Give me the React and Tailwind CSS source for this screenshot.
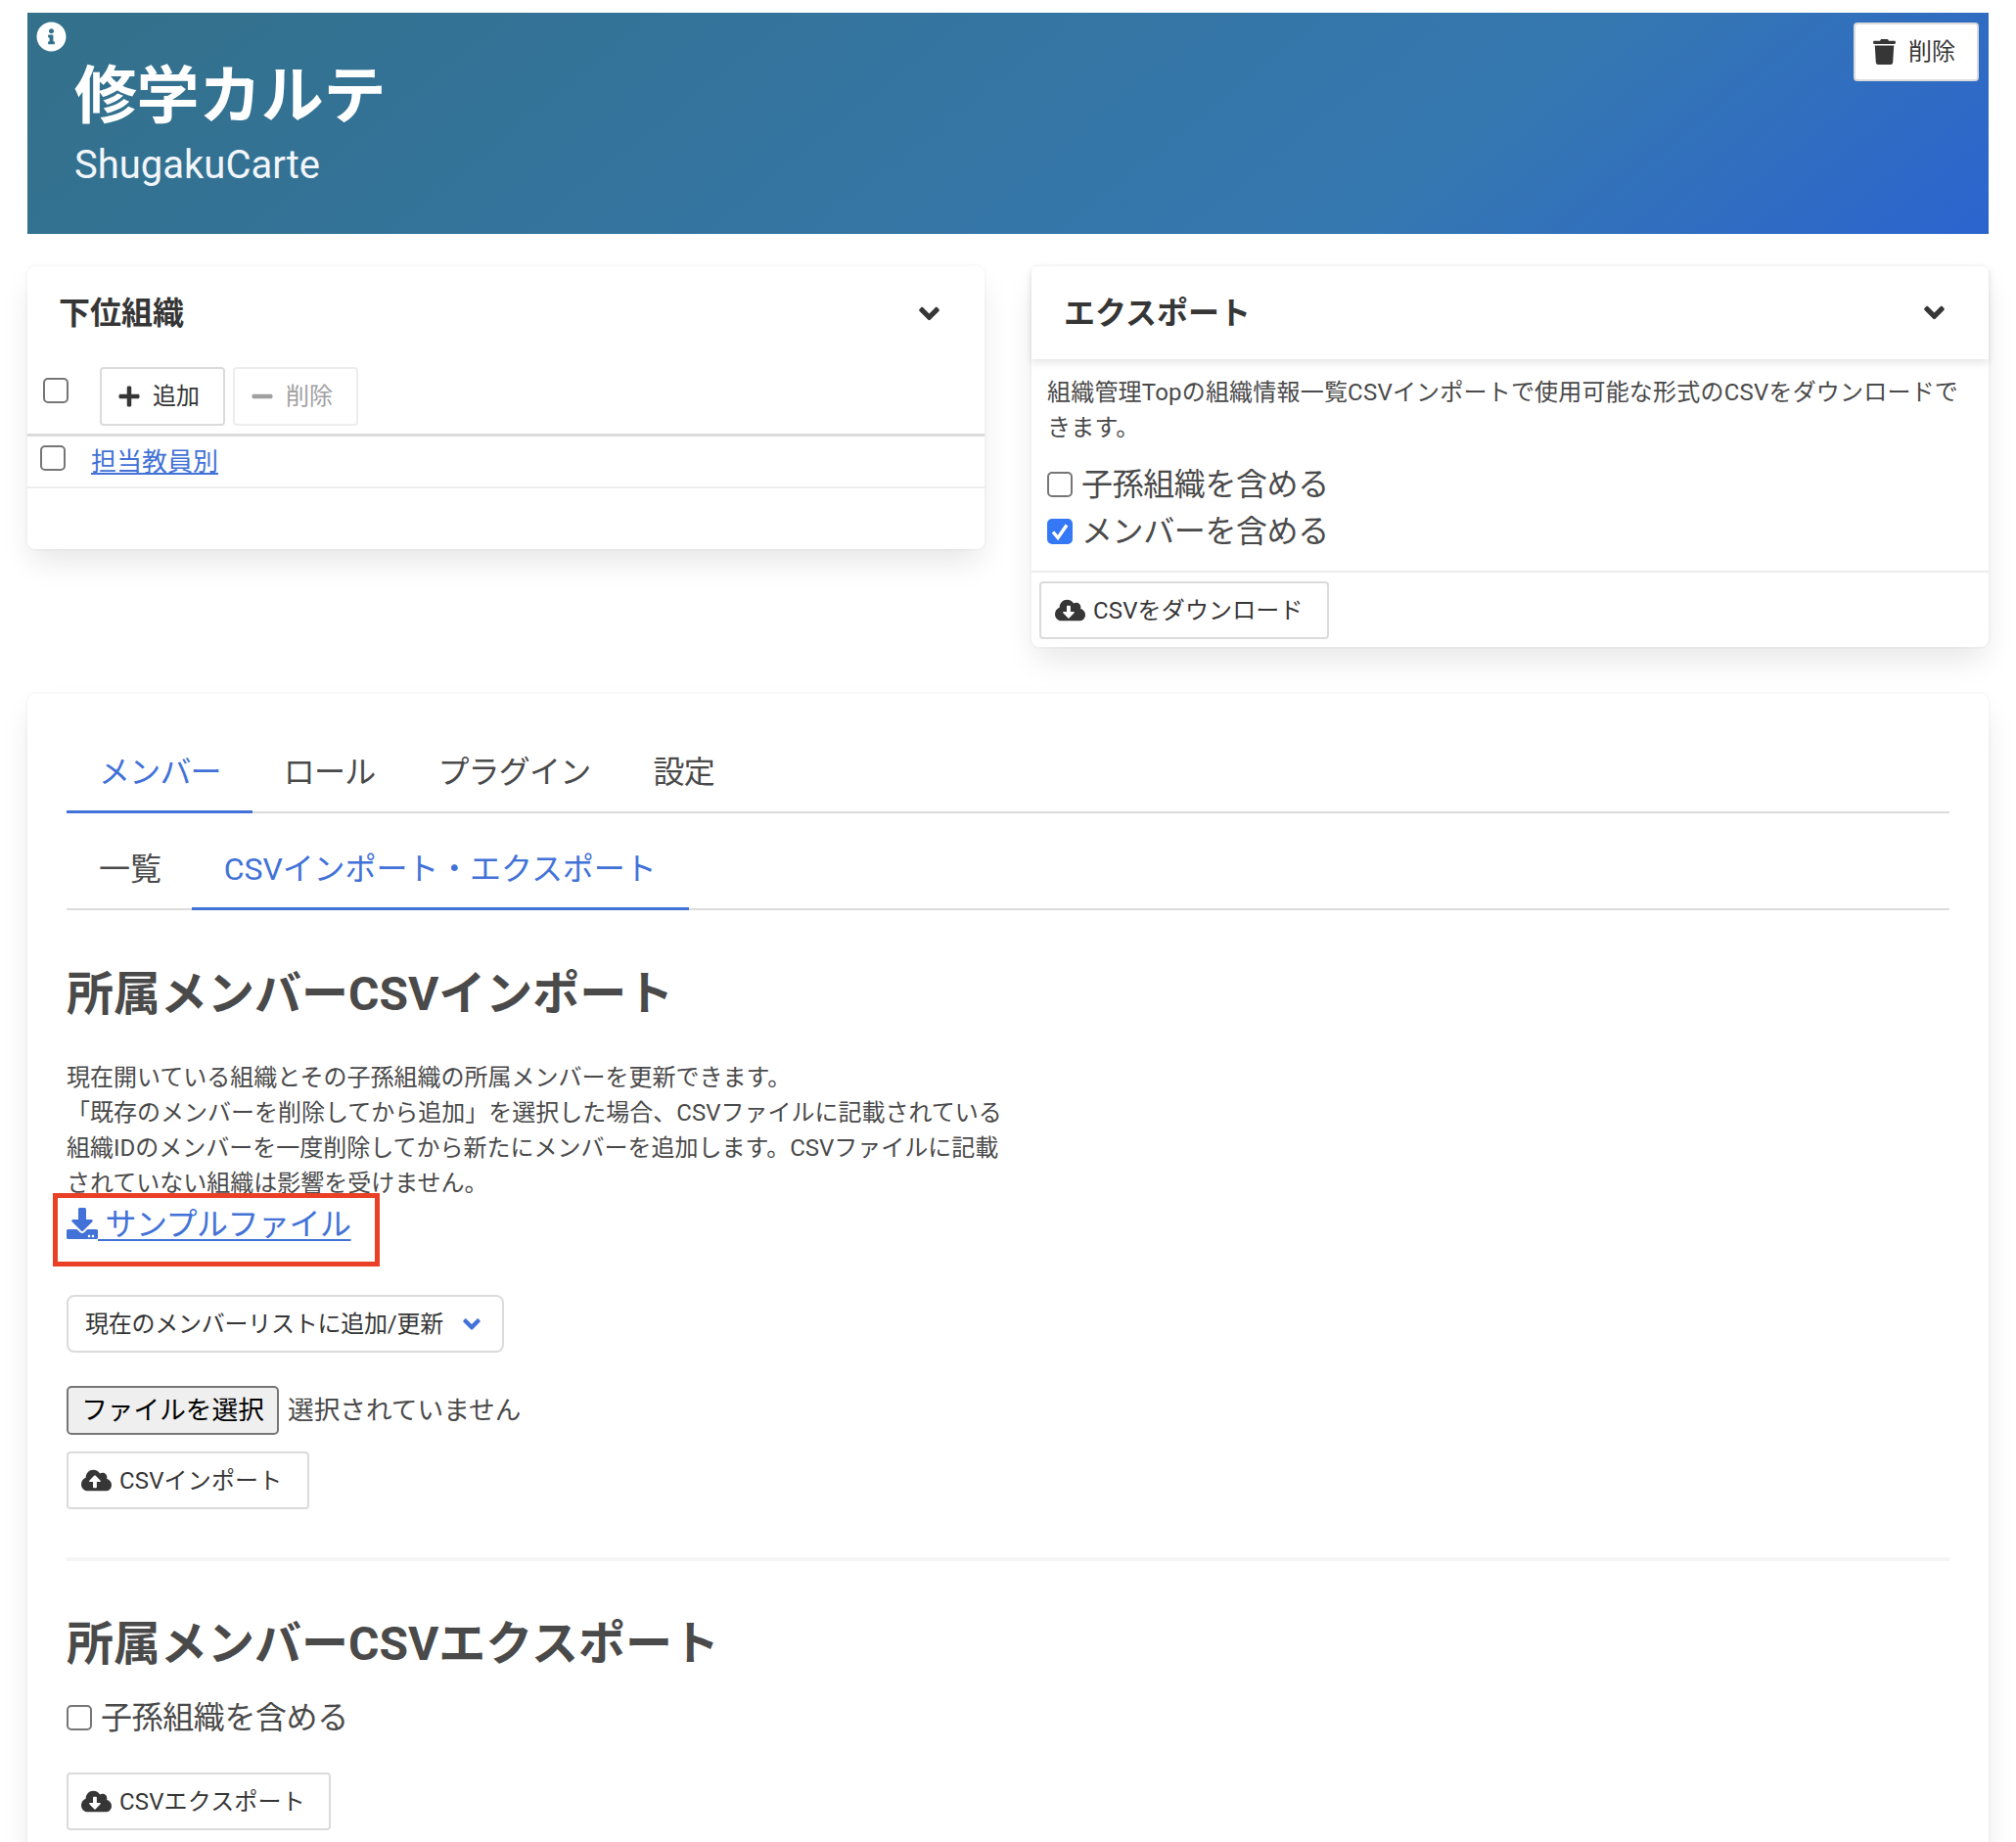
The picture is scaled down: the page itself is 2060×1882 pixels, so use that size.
import React from "react";
import { FaAngleDown, FaCloudDownloadAlt, FaCloudUploadAlt, FaDownload, FaInfoCircle, FaMinus, FaPlus, FaTrash } from "react-icons/fa";

function Check({ checked }) {
  return (
    <span className="relative w-[26px] h-[26px] shrink-0 block">
      <input
        type="checkbox"
        defaultChecked={checked}
        className="block appearance-none w-[26px] h-[26px] bg-white border-2 border-[#767676] rounded-[5px] checked:bg-[#3478f6] checked:border-[#3478f6]"
      />
      {checked && (
        <svg viewBox="0 0 26 26" className="absolute left-0 top-0 w-[26px] h-[26px]" fill="none">
          <path d="M6 13.5 L11 19.5 L20 6.5" stroke="white" strokeWidth="3.4" />
        </svg>
      )}
    </span>
  );
}

function Btn({ icon, children, className = "" }) {
  return (
    <button className={"flex items-center h-[59px] bg-white border-2 border-[#dbdbdb] rounded-[4px] text-[24px] tracking-[0.15px] text-[#363636] " + className}>
      {icon}
      <span>{children}</span>
    </button>
  );
}

function Tab({ active, children, className = "px-[32px]" }) {
  return (
    <div
      className={
        "pt-[16px] pb-[15px] text-[32px] leading-[48px] -mb-[2px] border-b-[3px] " +
        (active ? "text-[#4272d7] border-[#4272d7] " : "text-[#4a4a4a] border-transparent ") +
        className
      }
    >
      {children}
    </div>
  );
}

export default function App() {
  return (
    <div className="h-[1882px] overflow-hidden bg-white px-[28px] pt-[13px] text-[#4a4a4a] font-['Roboto','Noto_Sans_CJK_JP',sans-serif]">
      <section className="relative h-[226px] pl-[48px] pt-[53px] bg-[linear-gradient(141deg,#33708a_0%,#3578b0_71%,#2c64cf_100%)] text-white">
        <FaInfoCircle className="absolute left-[9px] top-[9px] w-[31px] h-[31px] text-white" />
        <h1 className="text-[64px] leading-[66px] font-bold tracking-[-0.4px]">修学カルテ</h1>
        <p className="mt-[12px] text-[40px] leading-[50px] text-[#f2f6fa]">ShugakuCarte</p>
        <button className="absolute right-[10px] top-[10px] flex items-center w-[128px] h-[60px] pl-[18px] bg-white border-2 border-[#dbdbdb] rounded-[4px] text-[24px] text-[#363636]">
          <FaTrash className="w-[23px] h-[26px] mr-[13px]" />
          <span>削除</span>
        </button>
      </section>

      <div className="mt-[33px] grid grid-cols-2 gap-[48px] items-start">
        <div className="h-[289px] bg-white rounded-[8px] shadow-[0_16px_32px_-4px_rgba(10,10,10,0.1),0_0_0_2px_rgba(10,10,10,0.02)]">
          <header className="h-[96px] flex items-center justify-between pl-[32px] pr-[43px]">
            <h3 className="text-[32px] font-bold text-[#363636]">下位組織</h3>
            <FaAngleDown className="w-[27px] h-[33px] text-[#363636]" />
          </header>
          <div className="h-[78px] pl-[16px] flex items-start border-b-[3px] border-[#dbdbdb]">
            <div className="mt-[18px]"><Check /></div>
            <div className="mt-[7px] ml-[32px] flex gap-[8px]">
              <button className="flex items-center w-[128px] h-[60px] pl-[16px] bg-white border-2 border-[#dbdbdb] rounded-[4px] text-[24px] text-[#363636]">
                <FaPlus className="w-[24px] h-[24px] mr-[12px]" />
                <span>追加</span>
              </button>
              <button className="flex items-center w-[128px] h-[60px] pl-[16px] bg-white border-2 border-[#ededed] rounded-[4px] text-[24px] text-[#a0a0a0]">
                <FaMinus className="w-[24px] h-[24px] mr-[12px]" />
                <span>削除</span>
              </button>
            </div>
          </div>
          <div className="h-[53px] pl-[13px] flex items-start border-b-2 border-[#ededed]">
            <div className="mt-[9px]"><Check /></div>
            <a className="mt-[7px] ml-[26px] text-[26px] leading-[38px] text-[#4272d7] underline">担当教員別</a>
          </div>
        </div>

        <div className="h-[389px] bg-white rounded-[8px] shadow-[0_16px_32px_-4px_rgba(10,10,10,0.1),0_0_0_2px_rgba(10,10,10,0.02)]">
          <header className="relative h-[95px] flex items-center justify-between pl-[33px] pr-[42px] shadow-[0_4px_8px_rgba(10,10,10,0.1)]">
            <h3 className="text-[32px] font-bold text-[#363636]">エクスポート</h3>
            <FaAngleDown className="w-[27px] h-[33px] text-[#363636]" />
          </header>
          <div className="pl-[16px] pr-[12px] pt-[16px] pb-[16px]">
            <p className="text-[24px] leading-[36px] whitespace-nowrap tracking-[0.2px]">組織管理Topの組織情報一覧CSVインポートで使用可能な形式のCSVをダウンロードで<br />きます。</p>
            <label className="mt-[16px] flex items-center gap-[9px] text-[32px] leading-[48px] tracking-[-0.4px]"><Check />子孫組織を含める</label>
            <label className="flex items-center gap-[9px] text-[32px] leading-[48px] tracking-[-0.4px]"><Check checked />メンバーを含める</label>
          </div>
          <div className="border-t-2 border-[#ededed] pt-[9px] pl-[8px]">
            <Btn className="w-[296px] pl-[14px]" icon={<FaCloudDownloadAlt className="w-[31px] h-[25px] mr-[8px] text-[#363636]" />}>CSVをダウンロード</Btn>
          </div>
        </div>
      </div>

      <main className="mt-[48px] h-[1400px] bg-white rounded-[8px] px-[40px] pt-[40px] shadow-[0_16px_32px_-4px_rgba(10,10,10,0.1),0_0_0_2px_rgba(10,10,10,0.02)]">
        <nav className="flex border-b-2 border-[#dbdbdb] tracking-[-0.8px]">
          <Tab active className="pl-[33px] pr-[32px]">メンバー</Tab>
          <Tab>ロール</Tab>
          <Tab>プラグイン</Tab>
          <Tab>設定</Tab>
        </nav>
        <nav className="mt-[17px] flex border-b-2 border-[#dbdbdb] tracking-[-0.1px]">
          <Tab className="pl-[33px] pr-[31px]">一覧</Tab>
          <Tab active className="px-[33px]">CSVインポート・エクスポート</Tab>
        </nav>

        <h2 className="mt-[50px] text-[48px] leading-[72px] font-bold">所属メンバーCSVインポート</h2>
        <p className="mt-[31px] text-[24px] leading-[36px] whitespace-nowrap">
          現在開いている組織とその子孫組織の所属メンバーを更新できます。<br />
          「既存のメンバーを削除してから追加」を選択した場合、CSVファイルに記載されている<br />
          組織IDのメンバーを一度削除してから新たにメンバーを追加します。CSVファイルに記載<br />
          されていない組織は影響を受けません。
        </p>
        <div className="relative h-[48px] text-[32px] leading-[48px] tracking-[-0.5px]">
          <a className="text-[#4272d7] underline decoration-2 underline-offset-4">
            <FaDownload className="inline w-[32px] h-[32px] align-[-4px]" />&nbsp;サンプルファイル
          </a>
          <div className="absolute -left-[14px] -top-[8px] w-[334px] h-[75px] border-[5px] border-[#ea4026]" />
        </div>

        <div className="mt-[48px] flex items-center w-[447px] h-[59px] pl-[17px] bg-white border-2 border-[#dbdbdb] rounded-[8px] text-[24px] tracking-[-0.25px] text-[#363636]">
          <span className="whitespace-nowrap">現在のメンバーリストに追加/更新</span>
          <FaAngleDown className="ml-[17px] w-[24px] h-[28px] text-[#4272d7]" />
        </div>

        <div className="mt-[34px] flex items-center text-[26.67px]">
          <button className="w-[217px] h-[50px] bg-[#efefef] border-2 border-[#767676] rounded-[5px] text-black">ファイルを選択</button>
          <span className="ml-[9px]">選択されていません</span>
        </div>

        <Btn className="mt-[17px] w-[248px] pl-[13px]" icon={<FaCloudUploadAlt className="w-[31px] h-[25px] mr-[8px]" />}>CSVインポート</Btn>

        <hr className="mt-[49px] h-[4px] border-0 bg-[#f5f5f5]" />

        <h2 className="mt-[49px] text-[48px] leading-[72px] font-bold">所属メンバーCSVエクスポート</h2>
        <label className="mt-[15px] flex items-center gap-[9px] text-[32px] leading-[48px] tracking-[-0.4px]"><Check />子孫組織を含める</label>
        <Btn className="mt-[32px] w-[270px] pl-[13px]" icon={<FaCloudDownloadAlt className="w-[31px] h-[25px] mr-[8px]" />}>CSVエクスポート</Btn>
      </main>
    </div>
  );
}
